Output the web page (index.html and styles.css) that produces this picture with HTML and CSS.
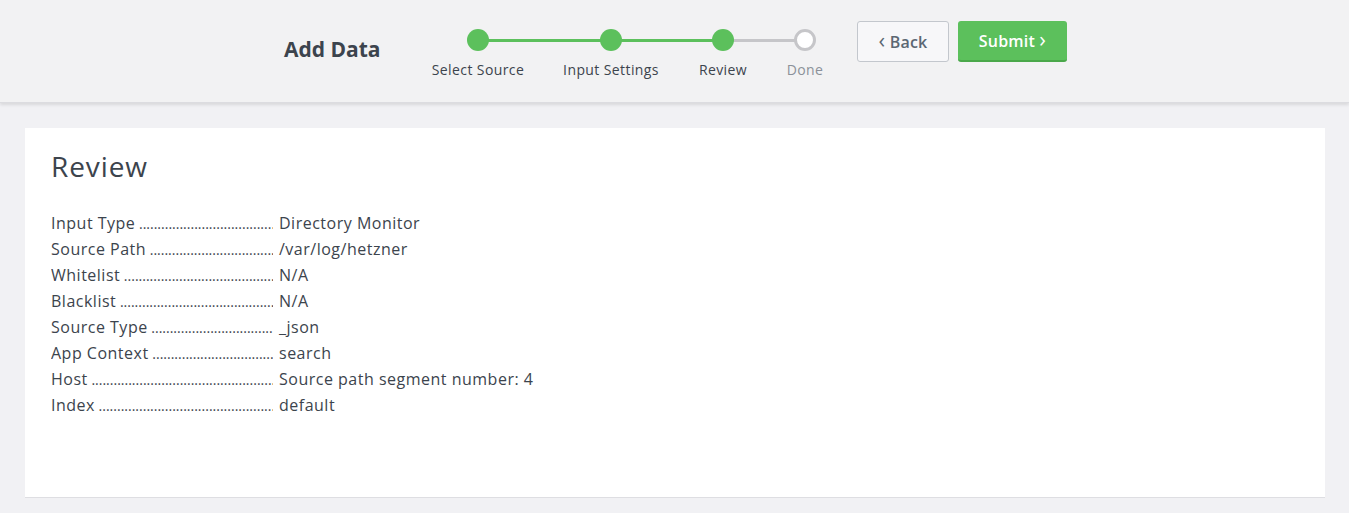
FILE: index.html
```html
<!DOCTYPE html>
<html>
<head>
<meta charset="utf-8">
<link rel="stylesheet" href="styles.css">
</head>
<body>
<header class="topbar">
  <h1 class="title">Add Data</h1>
  <div class="stepper">
    <div class="step first">
      <span class="dot"></span>
      <span class="label">Select Source</span>
    </div>
    <div class="step second">
      <span class="dot"></span>
      <span class="label">Input Settings</span>
    </div>
    <div class="step third">
      <span class="dot"></span>
      <span class="label">Review</span>
    </div>
    <div class="step pending last">
      <span class="dot"></span>
      <span class="label">Done</span>
    </div>
  </div>
  <div class="actions">
    <button class="btn btn-back"><span class="chev">&#8249;</span> Back</button>
    <button class="btn btn-submit">Submit <span class="chev">&#8250;</span></button>
  </div>
</header>
<main class="content">
  <section class="card">
    <h2 class="card-title">Review</h2>
    <dl class="review-list">
      <div class="row"><dt>Input Type</dt><dd>Directory Monitor</dd></div>
      <div class="row"><dt>Source Path</dt><dd>/var/log/hetzner</dd></div>
      <div class="row"><dt>Whitelist</dt><dd>N/A</dd></div>
      <div class="row"><dt>Blacklist</dt><dd>N/A</dd></div>
      <div class="row"><dt>Source Type</dt><dd>_json</dd></div>
      <div class="row"><dt>App Context</dt><dd>search</dd></div>
      <div class="row"><dt>Host</dt><dd>Source path segment number: 4</dd></div>
      <div class="row"><dt>Index</dt><dd>default</dd></div>
    </dl>
  </section>
</main>
</body>
</html>
```
FILE: styles.css
```css
* { box-sizing: border-box; }
html, body {
  margin: 0;
  padding: 0;
  background: #f1f1f4;
  font-family: "Open Sans", Lato, sans-serif;
  color: #3c444d;
}
.topbar {
  height: 102px;
  background: #f2f2f3;
  box-shadow: 0 1px 0 #dcdce0, 0 3px 3px rgba(0,0,0,0.10);
  display: flex;
  align-items: flex-start;
  padding-left: 284px;
  position: relative;
}
.title {
  margin: 35px 0 0 0;
  font-size: 21px;
  line-height: 28px;
  font-weight: 700;
  color: #3c444d;
  width: 154px;
  flex: none;
}
.stepper {
  display: flex;
  margin-top: 29px;
}
.step {
  position: relative;
  display: flex;
  flex-direction: column;
  align-items: center;
  width: 80px;
  flex: none;
}
.step .dot {
  width: 22px;
  height: 22px;
  border-radius: 50%;
  background: #5cc05c;
  position: relative;
  z-index: 2;
  flex: none;
}
.step .label {
  margin-top: 9px;
  font-size: 14px;
  line-height: 19px;
  letter-spacing: 0.4px;
  color: #3c444d;
  white-space: nowrap;
}
.step.pending .dot {
  background: #fff;
  border: 3px solid #c6c6c9;
}
.step.pending .label { color: #8b9199; }
.step.second { margin-left: 53px; }
.step.third { margin-left: 32px; }
.step.last { margin-left: 2px; }
.step::before {
  content: "";
  position: absolute;
  top: 10px;
  height: 3px;
  right: 50%;
  background: #5cc05c;
  z-index: 1;
}
.step.second::before { width: 133px; }
.step.third::before { width: 112px; }
.step.last::before { width: 82px; background: #c6c6c9; }
.step.first::before { display: none; }
.actions {
  display: flex;
  gap: 9px;
  margin-top: 21px;
  margin-left: 12px;
}
.btn {
  height: 41px;
  border-radius: 3px;
  font-family: "Open Sans", Lato, sans-serif;
  font-size: 16px;
  font-weight: 600;
  letter-spacing: 0.2px;
  cursor: pointer;
  padding: 0;
}
.btn-back {
  width: 92px;
  background: #f7f7f9;
  border: 1px solid #c3c7cd;
  color: #5c6773;
}
.btn-submit {
  width: 109px;
  background: #5cc05c;
  border: none;
  border-bottom: 2px solid #4aa84a;
  color: #fff;
}
.chev {
  font-size: 22px;
  line-height: 0;
  font-weight: 400;
}
.content {
  padding: 26px 24px 16px 25px;
}
.card {
  background: #fff;
  border-bottom: 1px solid #dedee2;
  height: 370px;
  padding: 19px 26px;
}
.card-title {
  margin: 0 0 25px 0;
  font-size: 28px;
  font-weight: 400;
  letter-spacing: 0.9px;
  color: #3c444d;
  line-height: 38px;
}
.review-list { margin: 0; }
.row {
  display: flex;
  font-size: 16px;
  line-height: 26px;
  height: 26px;
  letter-spacing: 0.5px;
  color: #3c444d;
}
.row dt {
  width: 222px;
  overflow: hidden;
  white-space: nowrap;
  flex: none;
}
.row dt::after {
  content: " ..........................................................................................................";
  font-size: 14px;
  line-height: 0;
  letter-spacing: 0;
}
.row dd { margin: 0 0 0 6px; white-space: nowrap; }
```
